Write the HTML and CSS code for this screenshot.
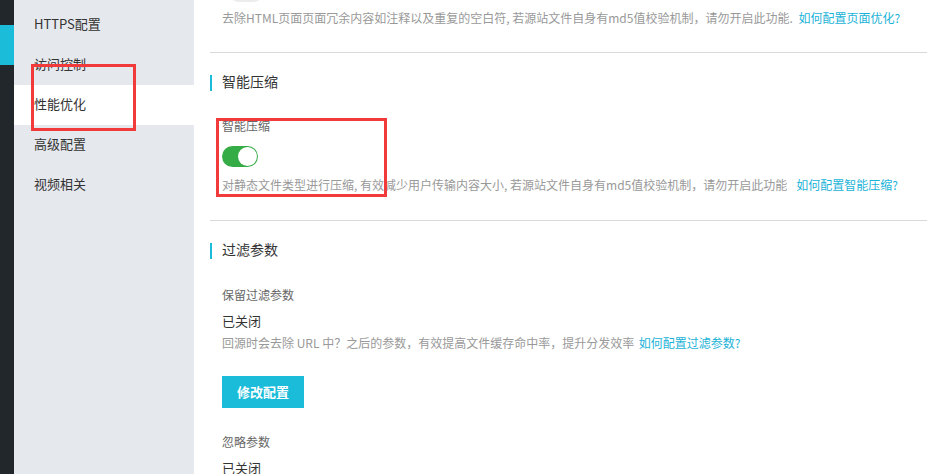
FILE: index.html
```html
<!DOCTYPE html>
<html lang="zh-CN">
<head>
<meta charset="utf-8">
<title>性能优化</title>
<link rel="stylesheet" href="styles.css">
</head>
<body>
<div class="page">
  <div class="rail"><div class="rail-active"></div></div>
  <nav class="submenu">
    <div class="item">HTTPS配置</div>
    <div class="item">访问控制</div>
    <div class="item active">性能优化</div>
    <div class="item">高级配置</div>
    <div class="item">视频相关</div>
  </nav>
  <main class="main">
    <div class="peek"></div>
    <div class="block">
      <p class="desc first">去除HTML页面页面冗余内容如注释以及重复的空白符, 若源站文件自身有md5值校验机制，请勿开启此功能. <a class="link link-a">如何配置页面优化?</a></p>
    </div>
    <div class="divider d1"></div>
    <h2 class="title t1">智能压缩</h2>
    <div class="block">
      <div class="label l1">智能压缩</div>
      <div class="switch"><span class="knob"></span></div>
      <p class="desc d-sw">对静态文件类型进行压缩, 有效减少用户传输内容大小, 若源站文件自身有md5值校验机制，请勿开启此功能<a class="link link-b">如何配置智能压缩?</a></p>
    </div>
    <div class="divider d2"></div>
    <h2 class="title t2">过滤参数</h2>
    <div class="block">
      <div class="label l2">保留过滤参数</div>
      <div class="status">已关闭</div>
      <p class="desc d-f">回源时会去除 URL 中？之后的参数，有效提高文件缓存命中率，提升分发效率 <a class="link link-c">如何配置过滤参数?</a></p>
      <button class="btn">修改配置</button>
      <div class="label l3">忽略参数</div>
      <div class="status s2">已关闭</div>
    </div>
  </main>
</div>
<div class="mark mark-1"></div>
<div class="mark mark-2"></div>
</body>
</html>
```
FILE: styles.css
```css
* { box-sizing: border-box; }
html, body { margin: 0; padding: 0; }
body {
  width: 927px;
  height: 474px;
  overflow: hidden;
  background: #fff;
  font-family: "Noto Sans CJK SC", "Noto Sans", "Liberation Sans", sans-serif;
  color: #333;
  position: relative;
}
.page { display: flex; height: 474px; }
.rail { width: 14px; background: #22272b; flex: none; }
.rail-active { margin-top: 25px; height: 40px; background: #1bbcd9; }
.submenu { width: 180px; background: #e5e8ed; padding-top: 5px; flex: none; }
.item {
  height: 40px;
  line-height: 38px;
  padding-left: 20px;
  font-size: 13px;
  color: #333;
}
.item.active { background: #fff; }
.main { flex: 1; padding-left: 16px; min-width: 0; }
.peek {
  margin-top: -20px;
  margin-left: 18px;
  width: 36px;
  height: 22px;
  border-radius: 11px;
  background: #ececec;
}
.block { padding-left: 12px; }
p { margin: 0; }
.desc {
  font-size: 12px;
  line-height: 20px;
  color: #999;
  white-space: nowrap;
}
.desc.first { margin-top: 6px; }
.link { color: #1bb3d8; text-decoration: none; }
.link-a { margin-left: 3px; }
.link-b { margin-left: 9px; }
.link-c { margin-left: 2px; }
.divider { height: 1px; background: #d9d9d9; }
.d1 { margin-top: 24px; }
.d2 { margin-top: 25px; }
.title {
  margin: 22px 0 0;
  height: 16px;
  line-height: 13px;
  border-left: 2px solid #1bbcd9;
  padding-left: 10px;
  font-size: 14px;
  font-weight: normal;
  color: #333;
}
.label { font-size: 12px; line-height: 20px; color: #666; }
.l1 { margin-top: 25px; }
.l2 { margin-top: 26px; }
.l3 { margin-top: 24px; }
.switch {
  margin-top: 10px;
  width: 36px;
  height: 21px;
  border-radius: 11px;
  background: #36ac47;
  display: flex;
  justify-content: flex-end;
  align-items: center;
  padding-right: 1px;
}
.knob {
  width: 19px;
  height: 19px;
  border-radius: 50%;
  background: #fff;
}
.d-sw { margin-top: 8px; }
.status { font-size: 13px; line-height: 20px; color: #333; margin-top: 6px; }
.s2 { margin-top: 6px; }
.d-f { margin-top: 2px; }
.btn {
  display: block;
  margin-top: 23px;
  width: 82px;
  height: 32px;
  border: none;
  background: #1bbcd9;
  color: #fff;
  font-family: inherit;
  font-size: 13px;
  font-weight: bold;
  padding: 0 0 2px;
}
.mark { position: absolute; border: 3px solid #f33a3a; }
.mark-1 { left: 31px; top: 64px; width: 105px; height: 67px; }
.mark-2 { left: 216px; top: 118px; width: 171px; height: 79px; }
```
